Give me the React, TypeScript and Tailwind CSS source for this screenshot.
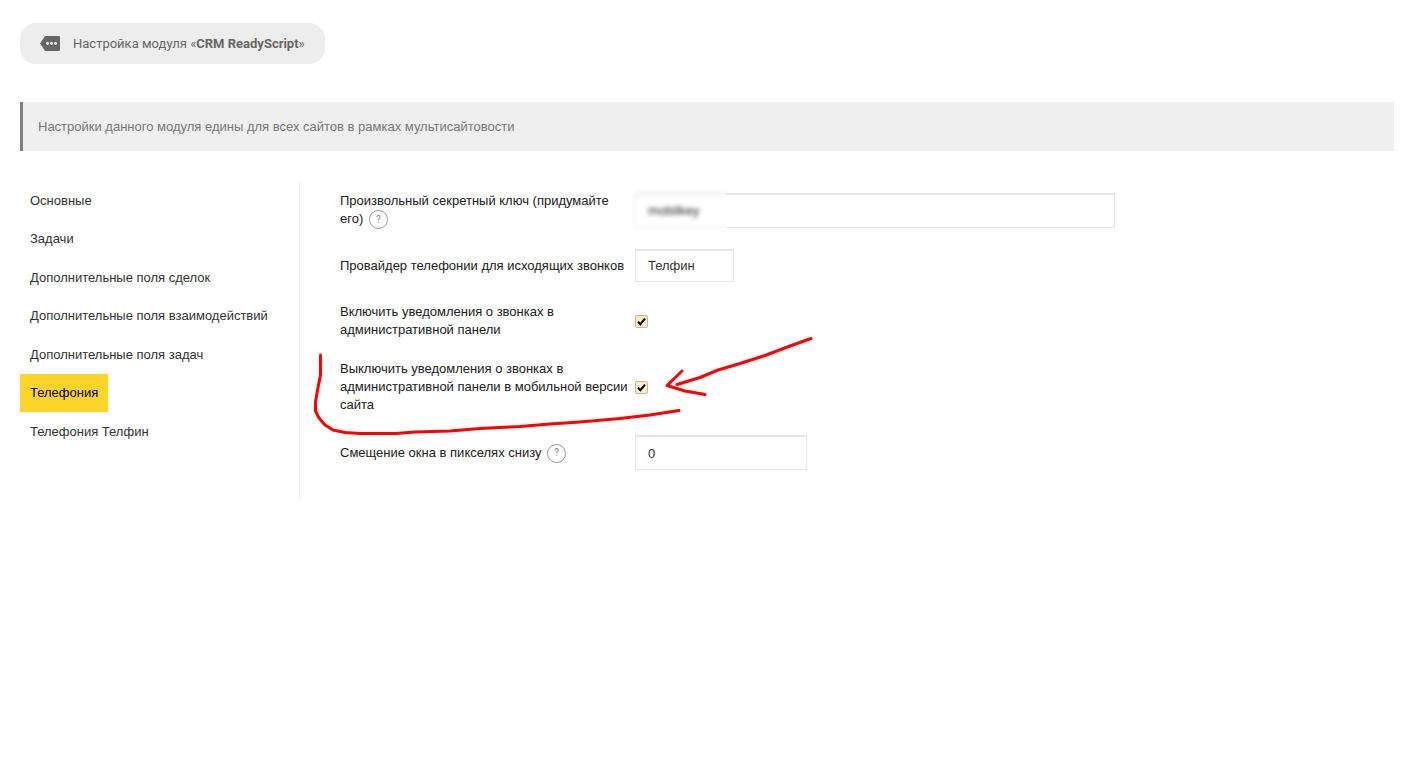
import { useState } from "react";

const tabs = [
  "Основные",
  "Задачи",
  "Дополнительные поля сделок",
  "Дополнительные поля взаимодействий",
  "Дополнительные поля задач",
  "Телефония",
  "Телефония Телфин",
];

const row = "grid grid-cols-[295px_1fr] items-center";
const label = "block leading-[18px] text-[#212121]";
const field = "border border-t-2 border-[#e6e6e6] bg-white px-3 text-[13px] text-[#333] outline-none";

function Hint({ text }: { text: string }) {
  return (
    <button
      type="button"
      title={text}
      className="-my-1 ml-[2px] inline-flex size-[19px] items-center justify-center rounded-full border border-[#999] align-middle font-[Roboto,sans-serif] text-[10px] leading-none text-[#888]"
    >
      ?
    </button>
  );
}

function Checkbox({ id }: { id: string }) {
  return (
    <span className="relative block size-[13px]">
      <input
        id={id}
        type="checkbox"
        defaultChecked
        className="peer block size-[13px] appearance-none rounded-[2px] border border-[#c8b78f] bg-[#fdebc8]"
      />
      <svg
        viewBox="0 0 13 13"
        className="pointer-events-none absolute inset-0 hidden size-[13px] peer-checked:block"
        fill="none"
        stroke="#000"
        strokeWidth="2"
      >
        <path d="M3 6.8 5.4 9.2 10 3.6" />
      </svg>
    </span>
  );
}

export default function App() {
  const [active, setActive] = useState("Телефония");

  return (
    <div className="min-h-screen bg-white pt-[23px] pr-[7px] pl-5 font-['Liberation_Sans',Arial,sans-serif] text-[13px] text-[#333]">
      {/* Module title */}
      <h1 className="flex h-[41px] w-fit items-center rounded-[16px] bg-[#ededed] px-5 font-[Roboto,sans-serif] text-[#666]">
        <svg viewBox="0 0 20 15" className="mr-[13px] h-[15px] w-5" fill="#666">
          <path d="M6 0h13Q20 0 20 1v13Q20 15 19 15H6Q5 15 4.400 14L0 7.500 4.400 1Q5 0 6 0Z" />
          <g fill="#fff">
            <circle cx="7.500" cy="7.500" r="1.400" />
            <circle cx="11.500" cy="7.500" r="1.400" />
            <circle cx="15.500" cy="7.500" r="1.400" />
          </g>
        </svg>
        <span>
          Настройка модуля «<b className="font-bold">CRM ReadyScript</b>»
        </span>
      </h1>

      <p className="mt-[38px] border-l-[3px] border-[#808080] bg-[#efefef] px-[15px] py-[15px] leading-[19px] text-[#777]">
        Настройки данного модуля едины для всех сайтов в рамках мультисайтовости
      </p>

      <div className="mt-[30px] flex">
        {/* Tabs */}
        <nav className="w-[280px] shrink-0 border-r border-[#ececec]">
          <ul className="grid h-[270px] auto-rows-fr">
            {tabs.map((tab) => (
              <li key={tab}>
                <a
                  href="#"
                  onClick={() => setActive(tab)}
                  className={
                    tab === active
                      ? "flex h-full w-fit items-center bg-[#ffd42a] px-[10px] text-black"
                      : "flex h-full w-fit items-center px-[10px]"
                  }
                >
                  {tab}
                </a>
              </li>
            ))}
          </ul>
        </nav>

        {/* Settings form */}
        <form className="relative flex flex-1 flex-col gap-[21px] pt-[11px] pb-[30px] pl-10">
          <div className={row}>
            <label htmlFor="secret" className={label}>
              Произвольный секретный ключ (придумайте его) <Hint text="Секретный ключ" />
            </label>
            <div className="relative max-w-[480px]">
              <input id="secret" defaultValue="mobilkey" className={`${field} block h-[35px] w-full`} />
              {/* Hides the key */}
              <span className="pointer-events-none absolute -inset-y-1 -left-1 w-24 backdrop-blur-[2px]" />
            </div>
          </div>
          <div className={row}>
            <label htmlFor="provider" className={label}>
              Провайдер телефонии для исходящих звонков
            </label>
            <select id="provider" className={`${field} h-[33px] w-[99px] appearance-none`}>
              <option>Телфин</option>
            </select>
          </div>
          <div className={row}>
            <label htmlFor="notify" className={label}>
              Включить уведомления о звонках в административной панели
            </label>
            <Checkbox id="notify" />
          </div>
          <div className={row}>
            <label htmlFor="mobile" className={label}>
              Выключить уведомления о звонках в административной панели в мобильной версии сайта
            </label>
            <Checkbox id="mobile" />
          </div>
          <div className={row}>
            <label htmlFor="offset" className={label}>
              Смещение окна в пикселях снизу <Hint text="Смещение окна" />
            </label>
            <input id="offset" defaultValue="0" className={`${field} h-[35px] w-[172px]`} />
          </div>

          {/* Hand-drawn marker over the form */}
          <svg
            className="pointer-events-none absolute top-0 left-0 h-[320px] w-[520px]"
            viewBox="300 181 520 320"
            fill="none"
            stroke="#fe0000"
            strokeWidth="3"
            strokeLinecap="round"
            strokeLinejoin="round"
          >
            <path d="M320.500 355V375L317.500 390 315.500 402V411L319 418 325 425 333 430 345 432.500 360 433.500H396L415 432 450 431 480 428.500 520 426.500 550 424 580 422 620 418.500 650 415 679 410.500" />
            <path d="M811 338.500 790 346 765 355.500 740 363.500 718 370 700 377.500 677 384.500M682 371 667 385.500 685 391 705 394.500" />
          </svg>
        </form>
      </div>
    </div>
  );
}
